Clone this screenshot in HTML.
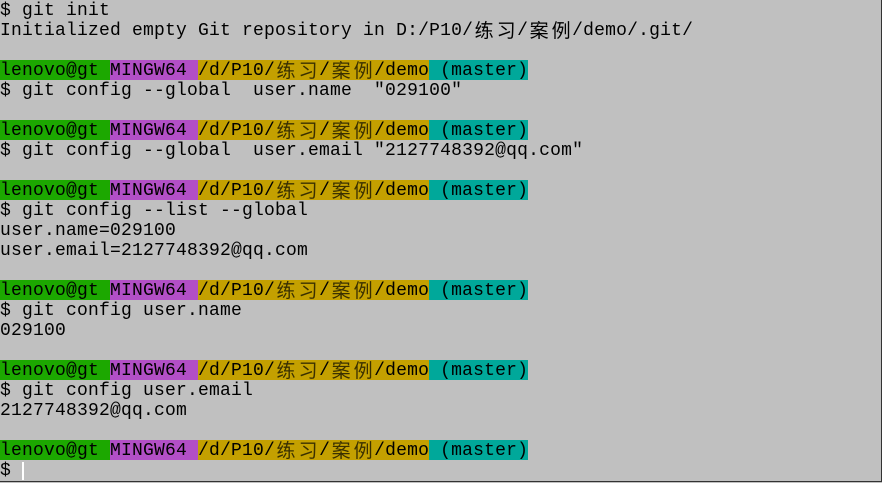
<!DOCTYPE html>
<html><head><meta charset="utf-8"><style>
html,body{margin:0;padding:0;}
body{width:882px;height:482px;background:#c0c0c0;overflow:hidden;position:relative;}
#t{position:absolute;left:0;top:0;width:881px;height:481px;border-right:1px solid #333;border-bottom:1px solid #333;box-sizing:content-box;}
.l{height:20px;line-height:23px;white-space:pre;font-family:"Liberation Mono","Noto Sans CJK SC",monospace;font-size:18px;letter-spacing:0.2px;color:#000;overflow:visible;}
.l span{display:inline-block;height:20px;line-height:23px;vertical-align:top;overflow:hidden;}
.g{background:#1ca800}.m{background:#b24fc6}.y{background:#c4a000}.c{background:#00a89a}
.l b.k{display:inline-block;width:22px;height:20px;line-height:20px;vertical-align:top;text-align:center;letter-spacing:0;font-weight:normal;font-style:normal;font-family:"Noto Sans CJK SC",sans-serif;font-size:19px;color:#3a3000;overflow:hidden}
.cur{position:absolute;left:22px;top:462px;width:2px;height:18px;background:#fff;}
</style></head><body><div id="t">
<div class="l">$ git init</div>
<div class="l">Initialized empty Git repository in D:/P10/<b class="k" style="color:#000">练</b><b class="k" style="color:#000">习</b>/<b class="k" style="color:#000">案</b><b class="k" style="color:#000">例</b>/demo/.git/</div>
<div class="l"> </div>
<div class="l"><span class="g">lenovo@gt </span><span class="m">MINGW64 </span><span class="y">/d/P10/<b class="k">练</b><b class="k">习</b>/<b class="k">案</b><b class="k">例</b>/demo</span><span class="c"> (master)</span></div>
<div class="l">$ git config --global  user.name  "029100"</div>
<div class="l"> </div>
<div class="l"><span class="g">lenovo@gt </span><span class="m">MINGW64 </span><span class="y">/d/P10/<b class="k">练</b><b class="k">习</b>/<b class="k">案</b><b class="k">例</b>/demo</span><span class="c"> (master)</span></div>
<div class="l">$ git config --global  user.email "2127748392@qq.com"</div>
<div class="l"> </div>
<div class="l"><span class="g">lenovo@gt </span><span class="m">MINGW64 </span><span class="y">/d/P10/<b class="k">练</b><b class="k">习</b>/<b class="k">案</b><b class="k">例</b>/demo</span><span class="c"> (master)</span></div>
<div class="l">$ git config --list --global</div>
<div class="l">user.name=029100</div>
<div class="l">user.email=2127748392@qq.com</div>
<div class="l"> </div>
<div class="l"><span class="g">lenovo@gt </span><span class="m">MINGW64 </span><span class="y">/d/P10/<b class="k">练</b><b class="k">习</b>/<b class="k">案</b><b class="k">例</b>/demo</span><span class="c"> (master)</span></div>
<div class="l">$ git config user.name</div>
<div class="l">029100</div>
<div class="l"> </div>
<div class="l"><span class="g">lenovo@gt </span><span class="m">MINGW64 </span><span class="y">/d/P10/<b class="k">练</b><b class="k">习</b>/<b class="k">案</b><b class="k">例</b>/demo</span><span class="c"> (master)</span></div>
<div class="l">$ git config user.email</div>
<div class="l">2127748392@qq.com</div>
<div class="l"> </div>
<div class="l"><span class="g">lenovo@gt </span><span class="m">MINGW64 </span><span class="y">/d/P10/<b class="k">练</b><b class="k">习</b>/<b class="k">案</b><b class="k">例</b>/demo</span><span class="c"> (master)</span></div>
<div class="l">$</div>
<div class="cur"></div>
</div></body></html>
